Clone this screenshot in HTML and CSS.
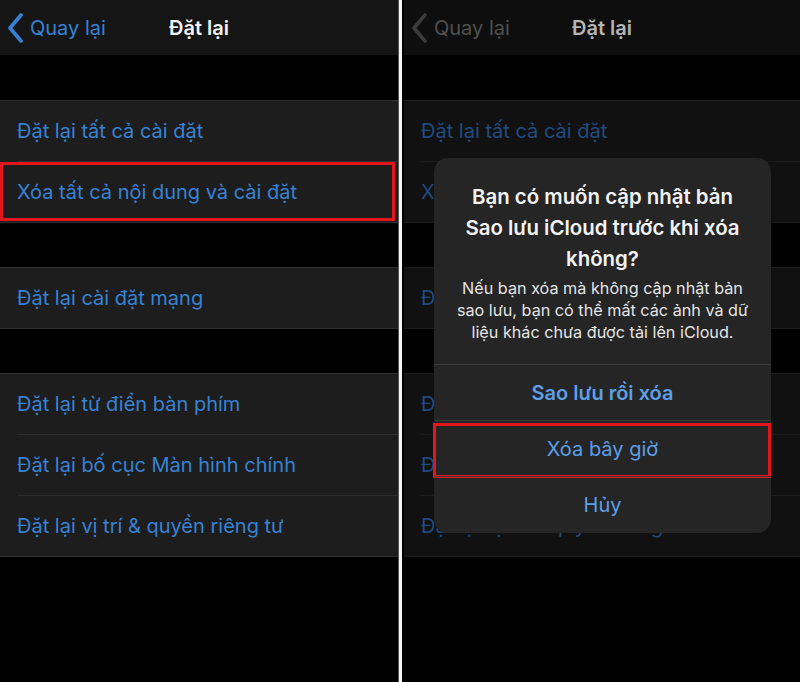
FILE: index.html
```html
<!DOCTYPE html>
<html lang="vi">
<head>
<meta charset="utf-8">
<title>Đặt lại</title>
<link rel="stylesheet" href="styles.css">
</head>
<body>
<div class="screen">
  <section class="panel">
    <header class="nav">
      <div class="nav-back">
        <svg class="chev" width="18" height="30" viewBox="0 0 18 30"><polyline points="14,2 3,15 14,28" fill="none" stroke="currentColor" stroke-width="3.6" stroke-linecap="round" stroke-linejoin="round"/></svg>
        <span>Quay lại</span>
      </div>
      <div class="nav-title">Đặt lại</div>
      <div></div>
    </header>
    <div class="gap"></div>
    <ul class="group">
      <li class="row">Đặt lại tất cả cài đặt</li>
      <li class="row row-mark">Xóa tất cả nội dung và cài đặt</li>
    </ul>
    <div class="gap gap-b"></div>
    <ul class="group">
      <li class="row">Đặt lại cài đặt mạng</li>
    </ul>
    <div class="gap gap-b"></div>
    <ul class="group">
      <li class="row">Đặt lại từ điển bàn phím</li>
      <li class="row">Đặt lại bố cục Màn hình chính</li>
      <li class="row">Đặt lại vị trí &amp; quyền riêng tư</li>
    </ul>
  </section>
  <div class="divider"></div>
  <section class="panel panel-dim">
    <header class="nav">
      <div class="nav-back">
        <svg class="chev" width="18" height="30" viewBox="0 0 18 30"><polyline points="14,2 3,15 14,28" fill="none" stroke="currentColor" stroke-width="3.6" stroke-linecap="round" stroke-linejoin="round"/></svg>
        <span>Quay lại</span>
      </div>
      <div class="nav-title">Đặt lại</div>
      <div></div>
    </header>
    <div class="gap"></div>
    <ul class="group">
      <li class="row">Đặt lại tất cả cài đặt</li>
      <li class="row">Xóa tất cả nội dung và cài đặt</li>
    </ul>
    <div class="gap gap-b"></div>
    <ul class="group">
      <li class="row">Đặt lại cài đặt mạng</li>
    </ul>
    <div class="gap gap-b"></div>
    <ul class="group">
      <li class="row">Đặt lại từ điển bàn phím</li>
      <li class="row">Đặt lại bố cục Màn hình chính</li>
      <li class="row">Đặt lại vị trí &amp; quyền riêng tư</li>
    </ul>

    <div class="alert">
      <div class="alert-body">
        <h2 class="alert-title">Bạn có muốn cập nhật bản<br>Sao lưu iCloud trước khi xóa<br>không?</h2>
        <p class="alert-msg">Nếu bạn xóa mà không cập nhật bản<br>sao lưu, bạn có thể mất các ảnh và dữ<br>liệu khác chưa được tải lên iCloud.</p>
      </div>
      <div class="alert-btn alert-btn-bold">Sao lưu rồi xóa</div>
      <div class="alert-btn alert-btn-mark">Xóa bây giờ</div>
      <div class="alert-btn">Hủy</div>
    </div>
  </section>
</div>
</body>
</html>
```

FILE: styles.css
```css
* { box-sizing: border-box; margin: 0; padding: 0; }
html, body { background: #000; }
body {
  width: 800px;
  height: 682px;
  overflow: hidden;
  font-family: "Inter", "Liberation Sans", sans-serif;
}
.screen {
  display: flex;
  width: 800px;
  height: 682px;
}
.panel {
  position: relative;
  width: 398px;
  height: 682px;
  background: #000;
  display: flex;
  flex-direction: column;
  --nav-bg: #151515;
  --row-bg: #1d1d1d;
  --sep: #2e2e2e;
  --link: #3683d5;
  --title: #f2f2f2;
}
.panel-dim {
  width: 398px;
  padding-left: 2px;
  --nav-bg: #0e0e0e;
  --row-bg: #111111;
  --sep: #1b1b1b;
  --link: #1f4c80;
  --title: #b5b5b5;
}
.panel-dim .nav-back { color: #3b3b3b; }
.panel-dim .nav-back span { color: #505050; }
.divider {
  width: 4px;
  height: 682px;
  background: #f4f4f4;
  border-left: 1px solid #555;
}
.nav {
  height: 55px;
  background: var(--nav-bg);
  display: grid;
  grid-template-columns: 1fr auto 1fr;
  align-items: center;
}
.nav-back {
  display: flex;
  align-items: center;
  color: var(--link);
  padding-left: 7px;
  gap: 5px;
  font-size: 20px;
}
.nav-back span { color: var(--link); }
.chev { display: block; }
.nav-title {
  color: var(--title);
  font-size: 20px;
  font-weight: 600;
}
.gap { height: 45px; flex: none; }
.gap-b { height: 44px; }
.group {
  list-style: none;
  background: var(--row-bg);
  border-top: 1px solid var(--sep);
  border-bottom: 1px solid var(--sep);
}
.row {
  position: relative;
  height: 60px;
  display: flex;
  align-items: center;
  padding-left: 17px;
  color: var(--link);
  font-size: 20px;
}
.row + .row { height: 61px; }
.row + .row::before {
  content: "";
  position: absolute;
  left: 17px;
  right: 0;
  top: 0;
  border-top: 1px solid var(--sep);
}
.row-mark::after {
  content: "";
  position: absolute;
  left: 0;
  right: 3px;
  top: 1px;
  bottom: 1px;
  border: 3px solid #e3161d;
}
.alert {
  position: absolute;
  left: 32px;
  top: 158px;
  width: 337px;
  height: 375px;
  background: #252526;
  border-radius: 14px;
  display: flex;
  flex-direction: column;
}
.alert-body {
  padding: 23px 10px 21px;
  text-align: center;
  border-bottom: 1px solid #3c3c3e;
}
.alert-title {
  color: #f3f3f3;
  font-size: 20.4px;
  font-weight: 600;
  line-height: 31px;
}
.alert-msg {
  margin-top: 3px;
  color: #e4e4e4;
  font-size: 16.2px;
  line-height: 22px;
}
.alert-btn {
  position: relative;
  height: 56px;
  display: flex;
  align-items: center;
  justify-content: center;
  color: #5c9fe6;
  font-size: 20px;
}
.alert-btn + .alert-btn { border-top: 1px solid #3c3c3e; }
.alert-btn-bold { height: 55px; font-weight: 600; }
.alert-btn-mark::after {
  content: "";
  position: absolute;
  left: -1px;
  right: 0;
  top: 2px;
  bottom: -2px;
  border: 3px solid #e3161d;
}
```
